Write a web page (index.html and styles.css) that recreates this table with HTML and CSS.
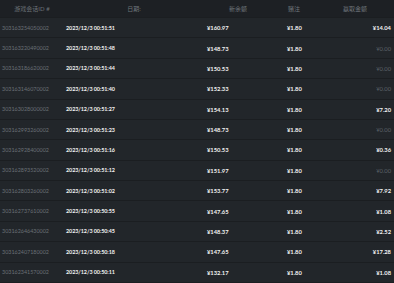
FILE: index.html
```html
<!DOCTYPE html>
<html lang="zh">
<head>
<meta charset="utf-8">
<link rel="stylesheet" href="styles.css">
</head>
<body>
<div class="table">
  <div class="row head">
    <div class="c c1">游戏会话ID #</div>
    <div class="c c2">日期:</div>
    <div class="c c3">新余额</div>
    <div class="c c4">赌注</div>
    <div class="c c5">赢取金额</div>
  </div>
  <div class="row"><div class="c c1">303163254050002</div><div class="c c2">2023/12/3 00:51:51</div><div class="c c3">¥160.97</div><div class="c c4">¥1.80</div><div class="c c5">¥14.04</div></div>
  <div class="row"><div class="c c1">303163220490002</div><div class="c c2">2023/12/3 00:51:48</div><div class="c c3">¥148.73</div><div class="c c4">¥1.80</div><div class="c c5 zero">¥0.00</div></div>
  <div class="row"><div class="c c1">303163186620002</div><div class="c c2">2023/12/3 00:51:44</div><div class="c c3">¥150.53</div><div class="c c4">¥1.80</div><div class="c c5 zero">¥0.00</div></div>
  <div class="row"><div class="c c1">303163146070002</div><div class="c c2">2023/12/3 00:51:40</div><div class="c c3">¥152.33</div><div class="c c4">¥1.80</div><div class="c c5 zero">¥0.00</div></div>
  <div class="row"><div class="c c1">303163028000002</div><div class="c c2">2023/12/3 00:51:27</div><div class="c c3">¥154.13</div><div class="c c4">¥1.80</div><div class="c c5">¥7.20</div></div>
  <div class="row"><div class="c c1">303162993260002</div><div class="c c2">2023/12/3 00:51:23</div><div class="c c3">¥148.73</div><div class="c c4">¥1.80</div><div class="c c5 zero">¥0.00</div></div>
  <div class="row"><div class="c c1">303162928400002</div><div class="c c2">2023/12/3 00:51:16</div><div class="c c3">¥150.53</div><div class="c c4">¥1.80</div><div class="c c5">¥0.36</div></div>
  <div class="row"><div class="c c1">303162893520002</div><div class="c c2">2023/12/3 00:51:12</div><div class="c c3">¥151.97</div><div class="c c4">¥1.80</div><div class="c c5 zero">¥0.00</div></div>
  <div class="row"><div class="c c1">303162803260002</div><div class="c c2">2023/12/3 00:51:02</div><div class="c c3">¥153.77</div><div class="c c4">¥1.80</div><div class="c c5">¥7.92</div></div>
  <div class="row"><div class="c c1">303162737610002</div><div class="c c2">2023/12/3 00:50:55</div><div class="c c3">¥147.65</div><div class="c c4">¥1.80</div><div class="c c5">¥1.08</div></div>
  <div class="row"><div class="c c1">303162646430002</div><div class="c c2">2023/12/3 00:50:45</div><div class="c c3">¥148.37</div><div class="c c4">¥1.80</div><div class="c c5">¥2.52</div></div>
  <div class="row"><div class="c c1">303162407180002</div><div class="c c2">2023/12/3 00:50:18</div><div class="c c3">¥147.65</div><div class="c c4">¥1.80</div><div class="c c5">¥17.28</div></div>
  <div class="row"><div class="c c1">303162341570002</div><div class="c c2">2023/12/3 00:50:11</div><div class="c c3">¥132.17</div><div class="c c4">¥1.80</div><div class="c c5">¥1.08</div></div>
</div>
</body>
</html>
```

FILE: styles.css
```css
html, body {
  margin: 0;
  padding: 0;
  background: #212529;
}
body {
  width: 394px;
  height: 283px;
  overflow: hidden;
  font-family: Lato, "Noto Sans CJK SC", sans-serif;
}
.table {
  display: flex;
  flex-direction: column;
}
.row {
  display: grid;
  grid-template-columns: 64px 140px 68px 44px 78px;
  height: 20.38px;
  align-items: center;
  box-sizing: border-box;
  border-bottom: 1px solid #1b1e21;
  background: #22262a;
  color: #f2f2f2;
  font-size: 5.8px;
  font-weight: 700;
}
.row.head {
  height: 18px;
  background: #1d2024;
  color: #6f757b;
  font-weight: 400;
  font-size: 6px;
}
.head .c {
  text-align: center;
  padding: 0;
  font-size: 6px;
  letter-spacing: 0;
}
.c {
  white-space: nowrap;
}
.c1 {
  padding-left: 2px;
  color: #6a7076;
  font-weight: 400;
  font-size: 5.4px;
}
.c2 {
  padding-left: 2px;
  font-size: 5.4px;
  letter-spacing: -0.05px;
}
.c3 { padding-left: 3px; }
.c4 { padding-left: 15px; }
.c5 { text-align: right; padding-right: 3px; }
.c5.zero { color: #5d6369; font-weight: 400; }
```
